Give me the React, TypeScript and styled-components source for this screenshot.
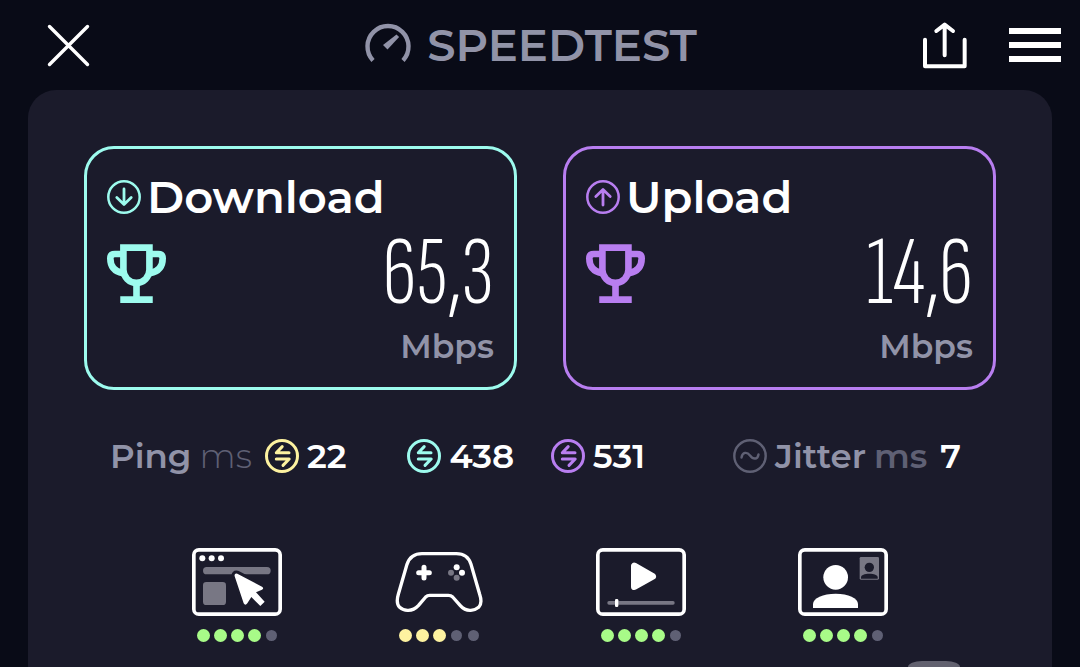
import React from "react";
import styled, { createGlobalStyle } from "styled-components";

const colors = {
  page: "#090b17",
  panel: "#1b1b2b",
  muted: "#9193a8",
  dim: "#5f6074",
  teal: "#9dfbee",
  purple: "#b87ef0",
  yellow: "#fdf2a0",
  green: "#a8fb88",
  grey: "#787784",
};

const GlobalStyle = createGlobalStyle`
  * { box-sizing: border-box; }
  body {
    margin: 0;
    background: ${colors.page};
    color: #fff;
    font-family: Montserrat, Inter, "Liberation Sans", sans-serif;
  }
`;

const Page = styled.div`
  display: flex;
  flex-direction: column;
  min-height: 100vh;
`;

const Header = styled.header`
  display: grid;
  grid-template-columns: 319fr auto 365fr;
  align-items: center;
  height: 90px;
  padding: 0 19px 0 47px;
`;

const Brand = styled.h1`
  display: flex;
  align-items: center;
  gap: 16px;
  margin: 0;
  color: ${colors.muted};
  font-size: 45px;
  font-weight: 600;
  line-height: 56px;
`;

const Actions = styled.div`
  display: flex;
  align-items: center;
  justify-content: flex-end;
  gap: 42px;
`;

const IconButton = styled.button`
  display: flex;
  justify-self: start;
  padding: 0;
  border: 0;
  background: none;
  color: #fff;
  cursor: pointer;
`;

const Panel = styled.main`
  display: flex;
  flex: 1;
  flex-direction: column;
  margin: 0 28px;
  padding: 56px 56px 0;
  border-radius: 28px 28px 0 0;
  background: ${colors.panel};
`;

const Cards = styled.div`
  display: grid;
  grid-template-columns: 1fr 1fr;
  gap: 46px;
`;

const Card = styled.section<{ $color: string }>`
  padding: 20px 20px 17px;
  border: 3px solid ${(p) => p.$color};
  border-radius: 30px;
  color: ${(p) => p.$color};
`;

const CardTitle = styled.h2`
  display: flex;
  align-items: center;
  gap: 6px;
  margin: 0;
  font-size: 45px;
  font-weight: 600;
  line-height: 56px;

  span { color: #fff; }
`;

const ValueRow = styled.div`
  display: flex;
  align-items: center;
  justify-content: space-between;
  height: 97px;
`;

const Value = styled.span`
  color: #fff;
  font-family: "Sofia Sans Extra Condensed", "Roboto Condensed", Roboto, sans-serif;
  font-size: 98px;
  font-weight: 340;
  line-height: 97px;
`;

const Unit = styled.div`
  color: ${colors.muted};
  font-size: 33px;
  font-weight: 600;
  line-height: 48px;
  text-align: right;
`;

const Stats = styled.div`
  display: grid;
  grid-template-columns: 297fr 143fr 182fr auto;
  margin-top: 42px;
  padding: 0 35px 0 26px;
`;

const Stat = styled.div`
  display: flex;
  align-items: center;
  gap: 8px;
  font-size: 34px;
  font-weight: 600;
  line-height: 48px;
`;

const Label = styled.span`
  color: ${colors.muted};
`;

const Ms = styled.span<{ $light?: boolean }>`
  margin-right: 5px;
  color: ${colors.dim};
  font-weight: ${(p) => (p.$light ? 300 : 600)};
`;

const Ratings = styled.ul`
  display: grid;
  grid-template-columns: repeat(4, 1fr);
  margin: 68px 0 0;
  padding: 0 52px;
  list-style: none;
`;

const Rating = styled.li`
  display: flex;
  flex-direction: column;
  align-items: center;
  gap: 13px;
`;

const Dots = styled.div`
  display: flex;
  gap: 4px;
`;

const Dot = styled.span<{ $color?: string }>`
  width: 13px;
  height: 13px;
  border: ${(p) => (p.$color ? 0 : 1)}px solid transparent;
  border-radius: 50%;
  background: ${(p) => p.$color ?? colors.dim} padding-box;
`;

const Handle = styled.div`
  align-self: flex-end;
  width: 52px;
  height: 6px;
  margin: auto 36px 0 0;
  border-radius: 14px 14px 0 0 / 6px 6px 0 0;
  background: #62616f;
`;

const Gauge = () => (
  <svg width="46" height="46" viewBox="0 0 46 46" fill="none" aria-hidden="true">
    <path d="M8 38.5A20.5 20.5 0 1 1 38 38.5" stroke="currentColor" strokeWidth="4.4" />
    <path d="M31.5 12.5l2.6 2.6L22.5 27.5l-4.5-4.5z" fill="currentColor" />
  </svg>
);

const CloseIcon = () => (
  <svg width="43" height="43" viewBox="0 0 43 43" fill="none" stroke="currentColor" strokeWidth="3.4" strokeLinecap="round">
    <path d="M2.5 2.5l38 38M40.5 2.5l-38 38" />
  </svg>
);

const ShareIcon = () => (
  <svg width="44" height="47" viewBox="0 0 132 141" fill="none" stroke="currentColor" strokeWidth="12" strokeLinecap="round" strokeLinejoin="round">
    <path d="M6 53v80h119V53M65 8v92M40 27L65 8l25 19" />
  </svg>
);

const MenuIcon = () => (
  <svg width="52" height="34" viewBox="0 0 52 34" fill="currentColor">
    <path d="M0 0h52v6H0zM0 14h52v6H0zM0 28h52v6H0z" />
  </svg>
);

const ArrowCircle = ({ up }: { up?: boolean }) => (
  <svg width="34" height="34" viewBox="0 0 34 34" fill="none" stroke="currentColor" strokeLinecap="round" strokeLinejoin="round" aria-hidden="true">
    <circle cx="17" cy="17" r="15.7" strokeWidth="2.5" />
    <path d={up ? "M17 25V10.5M9.8 16.5L17 9.5l7.2 7" : "M17 9v14.5M9.8 17.5L17 24.5l7.2-7"} strokeWidth="2.8" />
  </svg>
);

const Trophy = () => (
  <svg width="59" height="59" viewBox="0 0 178 178" fill="none" stroke="currentColor" strokeWidth="20" aria-hidden="true">
    <path d="M49.5 11H128V78a39.25 39.25 0 0 1-78.5 0z" />
    <path d="M45 30H24Q10 30 10 43q0 38 38 45M133 30h21q14 0 14 13 0 38-38 45" />
    <path d="M89 120v44M40 168h98" />
  </svg>
);

const SwapCircle = ({ color }: { color: string }) => (
  <svg width="34" height="34" viewBox="0 0 34 34" fill="none" stroke={color} strokeWidth="3" strokeLinecap="round" strokeLinejoin="round" aria-hidden="true">
    <circle cx="17" cy="17" r="15.5" />
    <path d="M24 13.7H11.3L17.2 7.6M11.3 20h12.9L18 26.4" />
  </svg>
);

const WaveCircle = () => (
  <svg width="34" height="34" viewBox="0 0 34 34" fill="none" stroke={colors.dim} strokeWidth="2.4" strokeLinecap="round" aria-hidden="true">
    <circle cx="17" cy="17" r="15.7" />
    <path d="M8.5 18.5C9.5 13 14 12.5 17 16.5S24.5 21 25.5 15.5" />
  </svg>
);

const Screen = ({ children }: { children: React.ReactNode }) => (
  <svg width="90" height="68" viewBox="0 0 270 204" aria-hidden="true">
    <rect x="5.5" y="5.5" width="259" height="193" rx="15" fill="none" stroke="#fff" strokeWidth="11" />
    {children}
  </svg>
);

const BrowserIcon = () => (
  <Screen>
    <g fill="#fff">
      <circle cx="31" cy="31" r="9" />
      <circle cx="59" cy="31" r="9" />
      <circle cx="87" cy="31" r="9" />
    </g>
    <rect x="33" y="57" width="203" height="22" rx="11" fill={colors.grey} />
    <rect x="33" y="102" width="69" height="69" rx="10" fill={colors.grey} />
    <path
      d="M136 77l74 39q7 5 0 9l-18 8 26 28-13 13-27-27-12 19q-6 8-11 0L128 85q-2-10 8-8z"
      fill="#fff"
      stroke={colors.panel}
      strokeWidth="18"
      strokeLinejoin="round"
      paintOrder="stroke"
    />
  </Screen>
);

const GamepadIcon = () => (
  <svg width="90" height="68" viewBox="0 0 270 204" aria-hidden="true">
    <path
      d="M84 17H187Q221 17 231 49L257 139Q266 166 254 178Q242 188 228 187Q211 187 199 173L176 147Q171 142 163 142H107Q100 142 95 147L73 173Q60 187 43 187Q28 188 17 178Q5 166 13 139L39 49Q50 17 84 17Z"
      fill="none"
      stroke="#fff"
      strokeWidth="10"
      strokeLinejoin="round"
    />
    <path d="M74 74h32M90 58v32" stroke="#fff" strokeWidth="15" strokeLinecap="round" />
    <circle cx="188" cy="58" r="9" fill="#fff" />
    <circle cx="204" cy="74" r="9" fill="#fff" />
    <circle cx="171" cy="74" r="9" fill={colors.grey} />
    <circle cx="188" cy="89" r="9" fill={colors.grey} />
  </svg>
);

const VideoIcon = () => (
  <Screen>
    <path d="M115 54v62l55-31z" fill="#fff" stroke="#fff" strokeWidth="20" strokeLinejoin="round" />
    <rect x="34" y="159" width="202" height="11" rx="5" fill={colors.grey} />
    <rect x="57" y="153" width="10" height="24" rx="4" fill="#fff" />
  </Screen>
);

const CallIcon = () => (
  <Screen>
    <circle cx="113" cy="88" r="37" fill="#fff" />
    <path d="M45 180v-12c0-18 30-31 68-31s67 13 67 31v12z" fill="#fff" />
    <rect x="185" y="27" width="58" height="68" rx="4" fill={colors.grey} />
    <circle cx="214" cy="58" r="14" fill={colors.panel} />
    <path d="M189 92v-4c0-7 11-11 25-11s25 4 25 11v4z" fill={colors.panel} />
  </Screen>
);

const results = [
  { title: "Download", value: "65,3", color: colors.teal, up: false },
  { title: "Upload", value: "14,6", color: colors.purple, up: true },
];

const ratings = [
  { name: "Browsing", Icon: BrowserIcon, score: 4, color: colors.green },
  { name: "Gaming", Icon: GamepadIcon, score: 3, color: colors.yellow },
  { name: "Streaming", Icon: VideoIcon, score: 4, color: colors.green },
  { name: "Video calls", Icon: CallIcon, score: 4, color: colors.green },
];

export default function App() {
  return (
    <Page>
      <GlobalStyle />
      <Header>
        <IconButton type="button" aria-label="Close">
          <CloseIcon />
        </IconButton>
        <Brand>
          <Gauge />
          SPEEDTEST
        </Brand>
        <Actions>
          <IconButton type="button" aria-label="Share">
            <ShareIcon />
          </IconButton>
          <IconButton type="button" aria-label="Menu">
            <MenuIcon />
          </IconButton>
        </Actions>
      </Header>
      <Panel>
        <Cards>
          {results.map((r) => (
            <Card key={r.title} $color={r.color}>
              <CardTitle>
                <ArrowCircle up={r.up} />
                <span>{r.title}</span>
              </CardTitle>
              <ValueRow>
                <Trophy />
                <Value>{r.value}</Value>
              </ValueRow>
              <Unit>Mbps</Unit>
            </Card>
          ))}
        </Cards>
        <Stats>
          <Stat>
            <Label>Ping</Label>
            <Ms $light>ms</Ms>
            <SwapCircle color={colors.yellow} />
            <span>22</span>
          </Stat>
          <Stat>
            <SwapCircle color={colors.teal} />
            <span>438</span>
          </Stat>
          <Stat>
            <SwapCircle color={colors.purple} />
            <span>531</span>
          </Stat>
          <Stat>
            <WaveCircle />
            <Label>Jitter</Label>
            <Ms>ms</Ms>
            <span>7</span>
          </Stat>
        </Stats>
        <Ratings>
          {ratings.map(({ name, Icon, score, color }) => (
            <Rating key={name} aria-label={`${name}: ${score} of 5`}>
              <Icon />
              <Dots>
                {[1, 2, 3, 4, 5].map((n) => (
                  <Dot key={n} $color={n <= score ? color : undefined} />
                ))}
              </Dots>
            </Rating>
          ))}
        </Ratings>
        <Handle />
      </Panel>
    </Page>
  );
}
